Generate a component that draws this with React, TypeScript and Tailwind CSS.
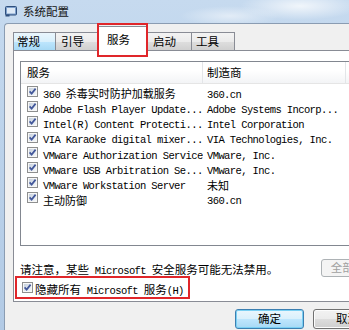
import { ReactNode } from "react";

const services: [string, string][] = [
  ["360 杀毒实时防护加载服务", "360.cn"],
  ["Adobe Flash Player Update...", "Adobe Systems Incorp..."],
  ["Intel(R) Content Protecti...", "Intel Corporation"],
  ["VIA Karaoke digital mixer...", "VIA Technologies, Inc."],
  ["VMware Authorization Service", "VMware, Inc."],
  ["VMware USB Arbitration Se...", "VMware, Inc."],
  ["VMware Workstation Server", "未知"],
  ["主动防御", "360.cn"],
];

const CJK = /[\u3000-\u9fff\uff00-\uffef]/;

// SimSun-ish mix: half-width mono latin, full-width CJK
const Mixed = ({ text, cjk }: { text: string; cjk: string }) => (
  <>
    {text.split(/([\u3000-\u9fff\uff00-\uffef]+)/).map((part, i) =>
      !part ? null : CJK.test(part) ? (
        <span key={i} className={cjk}>
          {part}
        </span>
      ) : (
        <span
          key={i}
          className="font-['Liberation_Mono',monospace] text-[10.5px] tracking-[-0.6px]"
        >
          {part}
        </span>
      )
    )}
  </>
);

const CheckBox = () => (
  <svg width="11" height="11" viewBox="0 0 11 11" className="shrink-0">
    <defs>
      <linearGradient id="cbfill" x1="0" y1="0" x2="1" y2="1">
        <stop offset="0" stopColor="#c7d1de" />
        <stop offset="1" stopColor="#f4f7fa" />
      </linearGradient>
    </defs>
    <rect x="0.5" y="0.5" width="10" height="10" fill="#f7f7f7" stroke="#8e8f8f" />
    <rect x="2" y="2" width="7" height="7" fill="url(#cbfill)" />
    <path d="M2.6 5.4 L4.6 7.6 L8.6 2.6" fill="none" stroke="#42579a" strokeWidth="1.7" />
  </svg>
);

const AppIcon = () => (
  <svg width="12" height="11" viewBox="0 0 12 11" className="shrink-0">
    <rect x="0.5" y="0.5" width="11" height="8.5" rx="1" fill="#7d9fcb" stroke="#2f4f7c" />
    <rect x="2" y="2" width="8" height="5.5" fill="#dde9f6" />
    <rect x="0.5" y="8.5" width="4" height="2" fill="#2f4f7c" />
  </svg>
);

const Tab = ({
  children,
  className,
}: {
  children: ReactNode;
  className: string;
}) => (
  <div
    className={`-ml-px first:ml-0 h-[18px] border border-b-0 border-[#898c95] flex items-center text-[11.5px] leading-none ${className}`}
  >
    {children}
  </div>
);

const Button = ({
  children,
  primary,
}: {
  children: ReactNode;
  primary?: boolean;
}) => (
  <div
    className={
      primary
        ? "w-[69px] h-[20px] rounded-[3px] border border-[#3c7fb1] bg-[linear-gradient(180deg,#eaf6fd_0%,#d9f0fc_50%,#bee6fd_51%,#a7d9f5_100%)] shadow-[inset_0_0_0_1px_#7ad0f3] flex items-center justify-center text-[11.5px]"
        : "w-[69px] h-[20px] rounded-[3px] border border-[#707070] bg-[linear-gradient(180deg,#f2f2f2_0%,#ebebeb_50%,#dddddd_51%,#cfcfcf_100%)] shadow-[inset_0_0_0_1px_#fcfcfc] flex items-center justify-center text-[11.5px]"
    }
  >
    {children}
  </div>
);

export default function App() {
  return (
    <div className="w-[349px] h-[330px] overflow-hidden flex flex-col bg-[linear-gradient(180deg,#c6daef_0%,#bcd3eb_40%,#b2cae5_100%)] font-['Noto_Sans_CJK_SC','Noto_Sans',sans-serif] text-black">
      {/* title bar */}
      <div className="h-[23px] shrink-0 flex items-center pl-[5px] gap-[6px] bg-[radial-gradient(ellipse_60px_14px_at_300px_6px,rgba(255,255,255,0.75),transparent),radial-gradient(ellipse_50px_10px_at_230px_16px,rgba(255,255,255,0.5),transparent)]">
        <AppIcon />
        <span className="text-[11.5px] text-[#151515] leading-none">系统配置</span>
      </div>

      <div className="flex flex-1 min-h-0">
        <div className="w-[4px] shrink-0" />
        <div className="w-[420px] shrink-0 bg-[#f0f0f0] border-l border-t border-[#8a9cb2] rounded-tl-[4px] pt-[2px] pl-[8px]">
          {/* tabs */}
          <div className="flex items-end h-[24px]">
            <Tab className="w-[43px] pl-[3px] bg-[linear-gradient(180deg,#eaf6fd_0%,#d9f0fc_50%,#bee6fd_51%,#a7d9f5_100%)]">
              常规
            </Tab>
            <Tab className="w-[43px] pl-[5px] bg-[linear-gradient(180deg,#f3f3f3_0%,#ebebeb_50%,#dedede_51%,#d0d0d0_100%)]">
              引导
            </Tab>
            <div className="relative z-10 -ml-px -mb-px w-[51px] h-[25px] border border-b-0 border-[#898c95] bg-white pl-[9px] pt-[7px] text-[11.5px] leading-none">
              服务
              <div className="absolute -left-[1px] -top-[4px] w-[51px] h-[34px] border-2 border-[#e0262a]" />
            </div>
            <Tab className="w-[45px] pl-[5px] bg-[linear-gradient(180deg,#f3f3f3_0%,#ebebeb_50%,#dedede_51%,#d0d0d0_100%)]">
              启动
            </Tab>
            <Tab className="w-[44px] pl-[4px] bg-[linear-gradient(180deg,#f3f3f3_0%,#ebebeb_50%,#dedede_51%,#d0d0d0_100%)]">
              工具
            </Tab>
          </div>

          {/* tab panel */}
          <div className="h-[252px] border border-[#898c95] bg-white pl-[6px] pt-[10px]">
            <div className="h-[185px] border border-[#828790] bg-white">
              <div className="h-[22px] flex border-b border-[#e5e5e5] bg-[linear-gradient(180deg,#ffffff_0%,#ffffff_40%,#f3f4f6_100%)] text-[11.5px]">
                <div className="w-[182px] border-r border-[#e3e5e8] pl-[6px] flex items-center">
                  服务
                </div>
                <div className="w-[143px] border-r border-[#e3e5e8] pl-[4px] flex items-center">
                  制造商
                </div>
              </div>
              {services.map(([name, maker]) => (
                <div key={name + maker} className="h-[15.2px] flex items-center whitespace-pre">
                  <div className="w-[182px] pl-[6px] flex items-center gap-[5px] overflow-x-clip">
                    <CheckBox />
                    <span className="leading-none">
                      <Mixed
                        text={name}
                        cjk="font-['Noto_Sans_CJK_SC',sans-serif] text-[11px]"
                      />
                    </span>
                  </div>
                  <div className="pl-[4px] leading-none">
                    <Mixed
                      text={maker}
                      cjk="font-['Noto_Sans_CJK_SC',sans-serif] text-[11px]"
                    />
                  </div>
                </div>
              ))}
            </div>

            <div className="mt-[13px] h-[18px] flex items-center whitespace-pre">
              <div className="w-[301px] leading-none">
                <Mixed
                  text="请注意，某些 Microsoft 安全服务可能无法禁用。"
                  cjk="text-[11.5px]"
                />
              </div>
              <div className="w-[80px] h-[18px] rounded-[3px] border border-[#adb2b5] bg-[#f4f4f4] text-[#a0a0a0] text-[11.5px] flex items-center justify-center">
                全部启用(E)
              </div>
            </div>

            <div className="relative h-[21px] pl-[2px] flex items-center gap-[2px] whitespace-pre">
              <CheckBox />
              <span className="leading-none">
                <Mixed text="隐藏所有 Microsoft 服务(H)" cjk="text-[11.5px]" />
              </span>
              <div className="absolute -left-[5px] -top-[1px] w-[175px] h-[23px] border-2 border-[#e0262a]" />
            </div>
          </div>

          {/* dialog buttons */}
          <div className="mt-[7px] ml-[222px] flex gap-[9px]">
            <Button primary>确定</Button>
            <Button>取消</Button>
          </div>
        </div>
      </div>
    </div>
  );
}
